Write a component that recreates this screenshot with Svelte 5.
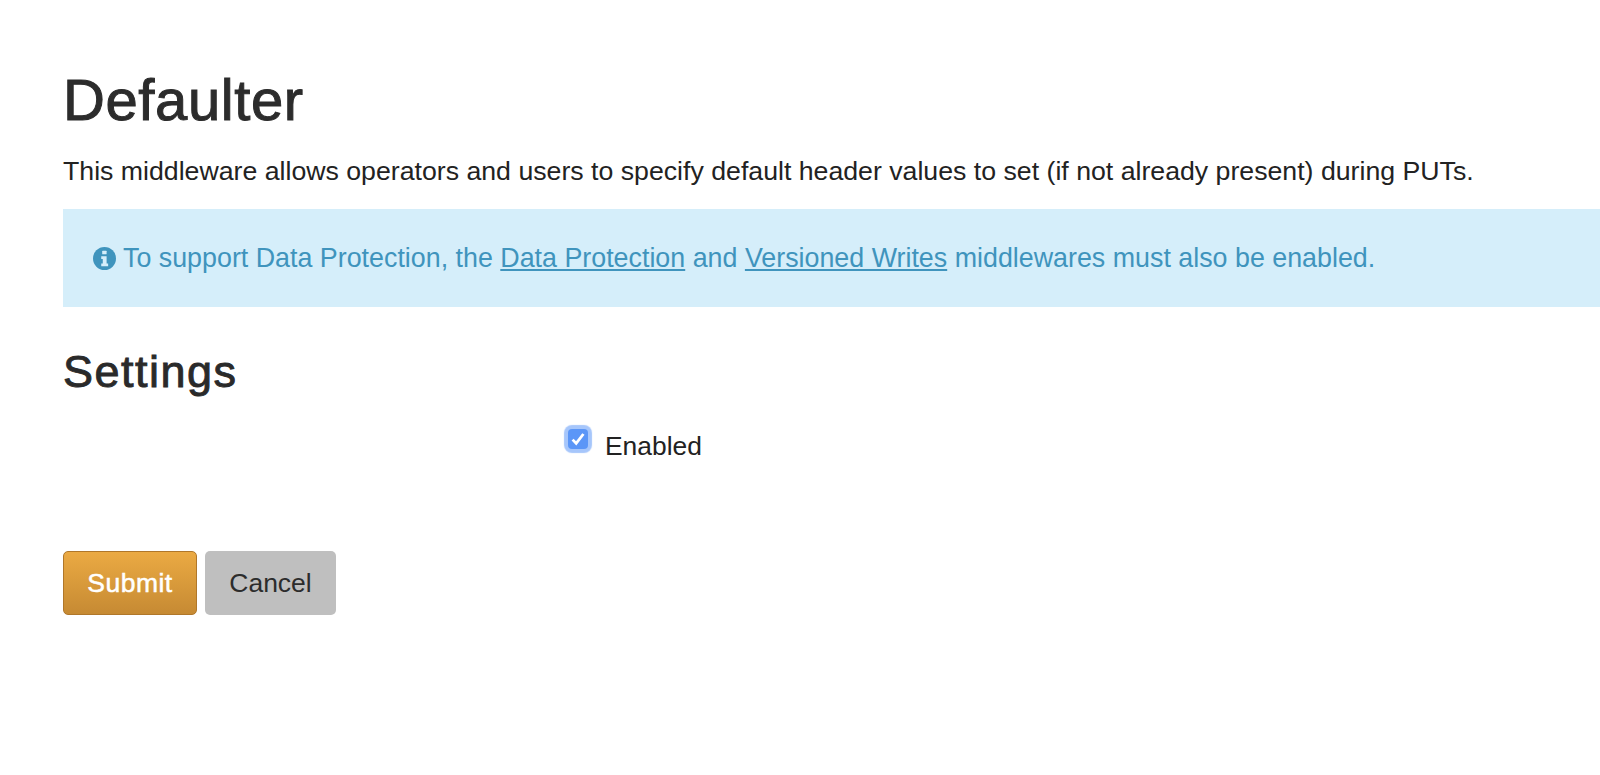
<script>
  let enabled = true;
</script>

<main>
  <h1>Defaulter</h1>
  <p class="lead">This middleware allows operators and users to specify default header values to set (if not already present) during PUTs.</p>

  <div class="info">
    <svg class="info-icon" viewBox="0 0 24 24" aria-hidden="true">
      <circle cx="12" cy="12" r="12" fill="#3f94bd" />
      <rect x="9.6" y="3.8" width="4.6" height="3.8" rx="0.6" fill="#d5eefa" />
      <path d="M8.6 9.6h5.6v7.6h1.6v3h-7.2v-3h1.6v-4.6h-1.6z" fill="#d5eefa" />
    </svg>
    <span>To support Data Protection, the <a href="#dp">Data Protection</a> and <a href="#vw">Versioned Writes</a> middlewares must also be enabled.</span>
  </div>

  <h2>Settings</h2>

  <div class="field">
    <div class="field-label"></div>
    <label class="check">
      <span class="box" class:on={enabled}>
        <svg viewBox="0 0 20 20" aria-hidden="true">
          <path d="M4.6 10.6l3.6 3.8L15.4 5" fill="none" stroke="#fff" stroke-width="2.8" />
        </svg>
      </span>
      <span class="check-text">Enabled</span>
    </label>
  </div>

  <div class="actions">
    <button class="submit" type="button">Submit</button>
    <button class="cancel" type="button">Cancel</button>
  </div>
</main>

<style>
  :global(body) {
    background: #fff;
    overflow: hidden;
  }

  main {
    padding: 68px 0 0 63px;
    height: 707px;
    font-family: "Liberation Sans", Arial, sans-serif;
    color: #222;
  }

  h1 {
    margin: 0;
    font-size: 58px;
    line-height: 64px;
    letter-spacing: 0.6px;
    font-weight: 400;
    color: #2c2c2c;
    -webkit-text-stroke: 1px #2c2c2c;
  }

  .lead {
    margin: 21px 0 0;
    font-size: 26.7px;
    line-height: 36px;
    color: #222;
  }

  .info {
    margin-top: 20px;
    height: 98px;
    padding-left: 30px;
    display: flex;
    align-items: center;
    background: #d5eefa;
    color: #3f94bd;
    font-size: 26.83px;
  }

  .info-icon {
    width: 23px;
    height: 23px;
    margin-right: 7px;
  }

  .info a {
    color: #3f94bd;
    text-decoration: underline;
  }

  h2 {
    margin: 42px 0 0;
    font-size: 45px;
    line-height: 46px;
    letter-spacing: 1.5px;
    font-weight: 400;
    color: #2a2a2a;
    -webkit-text-stroke: 0.9px #2a2a2a;
  }

  .field {
    margin-top: 34px;
    display: grid;
    grid-template-columns: 505px 1fr;
  }

  .check {
    display: flex;
    align-items: flex-start;
    gap: 17px;
  }

  .box {
    width: 20px;
    height: 20px;
    border-radius: 4px;
    background: #5b96f7;
    box-shadow: 0 0 1px 4px #a6c6fb;
    display: block;
  }

  .box svg {
    display: block;
  }

  .check-text {
    margin-top: 2px;
    font-size: 26.4px;
    line-height: 30px;
    color: #222;
  }

  .actions {
    margin-top: 90px;
    display: flex;
    gap: 8px;
  }

  button {
    height: 64px;
    border-radius: 5px;
    font-family: inherit;
    font-size: 26.5px;
    padding: 0;
    cursor: pointer;
  }

  .submit {
    width: 134px;
    color: #fff;
    border: 1px solid #b0772a;
    background: linear-gradient(#ebaa43, #c68a33);
    letter-spacing: 0.5px;
    -webkit-text-stroke: 0.5px #fff;
  }

  .cancel {
    width: 131px;
    color: #2c2c2c;
    border: none;
    background: #bfbfbf;
  }
</style>
